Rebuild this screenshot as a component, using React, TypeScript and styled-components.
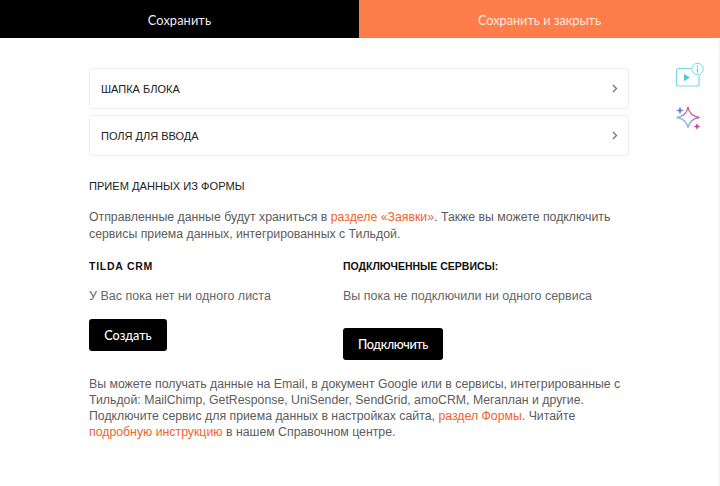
import React from 'react';
import styled, { createGlobalStyle } from 'styled-components';

const GlobalStyle = createGlobalStyle`
  html, body {
    margin: 0;
    padding: 0;
    background: #fff;
    overflow: hidden;
  }
  body {
    font-family: "Liberation Sans", Arial, sans-serif;
  }
`;

const Page = styled.div`
  width: 720px;
  height: 486px;
  overflow: hidden;
  display: flex;
  flex-direction: column;
`;

const TopBar = styled.div`
  display: flex;
  height: 38px;
  flex-shrink: 0;
`;

const TopButton = styled.button<{ $accent?: boolean }>`
  border: 0;
  padding: 1px 0 0;
  width: ${(p) => (p.$accent ? '361px' : '359px')};
  background: ${(p) => (p.$accent ? '#ff7d4b' : '#000')};
  color: ${(p) => (p.$accent ? '#ffe9df' : '#eee')};
  font-family: Lato, sans-serif;
  font-size: 12.8px;
  letter-spacing: ${(p) => (p.$accent ? '-0.05px' : '0.1px')};
`;

const Body = styled.div`
  flex: 1;
  display: flex;
  padding: 30px 0 0 89px;
  border-right: 2px solid #f6f6f6;
`;

const Main = styled.div`
  width: 540px;
  flex-shrink: 0;
`;

const Side = styled.div`
  margin-left: 47px;
  margin-top: -7px;
  display: flex;
  flex-direction: column;
  gap: 16px;
`;

const Accordion = styled.div`
  height: 41px;
  box-sizing: border-box;
  border: 1px solid #ececec;
  border-radius: 3px;
  display: flex;
  align-items: center;
  justify-content: space-between;
  padding: 0 10px 0 11px;
  margin-bottom: 6px;
  font-size: 11px;
  color: #222;
`;

const SectionTitle = styled.div`
  margin-top: 23px;
  font-size: 11.1px;
  line-height: 14px;
  color: #222;
`;

const Text = styled.p`
  margin: 16px 0 0;
  font-size: 12.3px;
  line-height: 17px;
  color: #5c5c5c;
`;

const Link = styled.a`
  color: #f4622a;
  text-decoration: none;
`;

const Columns = styled.div`
  display: flex;
  margin-top: 16px;
`;

const Column = styled.div<{ $wide?: boolean }>`
  width: ${(p) => (p.$wide ? '286px' : '254px')};
`;

const ColumnTitle = styled.div<{ $tracking?: number }>`
  font-size: 10.5px;
  font-weight: 700;
  line-height: 14px;
  letter-spacing: ${(p) => p.$tracking ?? 0}px;
  color: #111;
`;

const ColumnText = styled.div`
  margin-top: 15px;
  font-size: 12.5px;
  line-height: 17px;
  color: #666;
`;

const ActionButton = styled.button<{ $w: number; $top: number; $tracking?: number }>`
  display: block;
  width: ${(p) => p.$w}px;
  height: 32px;
  margin-top: ${(p) => p.$top}px;
  border: 0;
  border-radius: 3px;
  background: #000;
  color: #fff;
  font-family: Lato, sans-serif;
  font-size: 12.6px;
  font-weight: 500;
  letter-spacing: ${(p) => p.$tracking ?? 0}px;
`;

const FooterText = styled(Text)`
  margin-top: 16px;
  line-height: 16px;
`;

const Chevron = () => (
  <svg width="6" height="9" viewBox="0 0 6 9" fill="none">
    <path d="M1 1 4.500 4.500 1 8" stroke="#777" strokeWidth="1.4" />
  </svg>
);

const VideoInfoIcon = () => (
  <svg width="28" height="28" viewBox="0 0 28 28" fill="none">
    <path d="M15 7.500H2.500a2 2 0 0 0-2 2v13.500a2 2 0 0 0 2 2h18.500a2 2 0 0 0 2-2v-8" stroke="#78d8ea" strokeWidth="1.200" />
    <path d="M8 13v7l6-3.500z" fill="#55c4dc" />
    <circle cx="21.500" cy="8" r="5.700" stroke="#78d8ea" strokeWidth="1" />
    <path d="M21.500 7.500v4" stroke="#55c4dc" strokeWidth="1.200" />
    <circle cx="21.500" cy="5.400" r="0.800" fill="#55c4dc" />
  </svg>
);

const SparkleIcon = () => (
  <svg width="28" height="28" viewBox="0 0 28 28" fill="none">
    <defs>
      <linearGradient id="sparkle" x1="0.7" y1="0" x2="0.2" y2="1">
        <stop offset="0" stopColor="#ee5a5a" />
        <stop offset="0.4" stopColor="#b56cc8" />
        <stop offset="0.65" stopColor="#8fb4e6" />
        <stop offset="1" stopColor="#8fd4ec" />
      </linearGradient>
    </defs>
    <path d="M12 2c.8 6 3.600 9.800 12 11-7.800 1-11 4.500-12 11-1-6.500-4.200-10-12-11C8.400 11.800 11.200 8 12 2z" transform="translate(.5 0) scale(.96)" stroke="url(#sparkle)" strokeWidth="1.400" />
    <path d="M3.500 1.500 4.600 4.400 7.500 5.500 4.600 6.600 3.500 9.500 2.400 6.600-.500 5.500 2.400 4.400z" transform="translate(.5 0)" fill="#6a80d0" />
    <path d="M21 18 22 20.500 24.500 21.500 22 22.500 21 25 20 22.500 17.500 21.500 20 20.500z" fill="#d8409c" />
  </svg>
);

const App: React.FC = () => (
  <Page>
    <GlobalStyle />
    <TopBar>
      <TopButton>Сохранить</TopButton>
      <TopButton $accent>Сохранить и закрыть</TopButton>
    </TopBar>
    <Body>
      <Main>
        <Accordion>
          ШАПКА БЛОКА
          <Chevron />
        </Accordion>
        <Accordion>
          ПОЛЯ ДЛЯ ВВОДА
          <Chevron />
        </Accordion>
        <SectionTitle>ПРИЕМ ДАННЫХ ИЗ ФОРМЫ</SectionTitle>
        <Text>
          Отправленные данные будут храниться в <Link>разделе «Заявки»</Link>. Также вы можете подключить
          сервисы приема данных, интегрированных с Тильдой.
        </Text>
        <Columns>
          <Column>
            <ColumnTitle $tracking={0.75}>TILDA CRM</ColumnTitle>
            <ColumnText>У Вас пока нет ни одного листа</ColumnText>
            <ActionButton $w={78} $top={14}>Создать</ActionButton>
          </Column>
          <Column $wide>
            <ColumnTitle>ПОДКЛЮЧЕННЫЕ СЕРВИСЫ:</ColumnTitle>
            <ColumnText>Вы пока не подключили ни одного сервиса</ColumnText>
            <ActionButton $w={100} $top={23} $tracking={-0.4}>Подключить</ActionButton>
          </Column>
        </Columns>
        <FooterText>
          Вы можете получать данные на Email, в документ Google или в сервисы, интегрированные с
          Тильдой: MailChimp, GetResponse, UniSender, SendGrid, amoCRM, Мегаплан и другие.
          Подключите сервис для приема данных в настройках сайта, <Link>раздел Формы</Link>. Читайте{' '}
          <Link>подробную инструкцию</Link> в нашем Справочном центре.
        </FooterText>
      </Main>
      <Side>
        <VideoInfoIcon />
        <SparkleIcon />
      </Side>
    </Body>
  </Page>
);

export default App;
